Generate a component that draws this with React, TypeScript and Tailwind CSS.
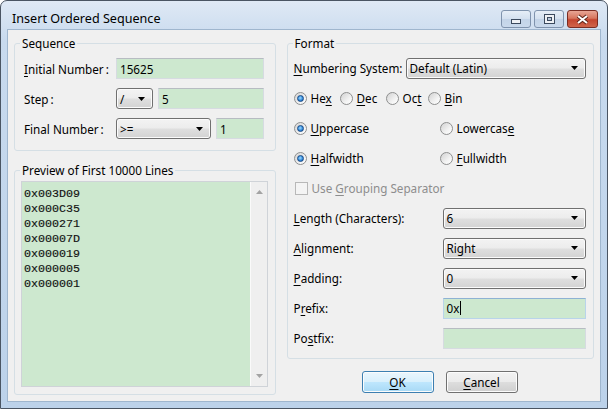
import React from "react";

type Kids = { children?: React.ReactNode };

// mnemonic letter
function U({ children }: Kids) {
  return <span className="underline decoration-1 underline-offset-[2px]">{children}</span>;
}

function Arrow({ color = "#000" }: { color?: string }) {
  return (
    <svg width="7" height="4" viewBox="0 0 7 4" className="shrink-0">
      <path d="M0 0H7L3.5 4Z" fill={color} />
    </svg>
  );
}

function Combo({ value, className }: { value: string; className: string }) {
  return (
    <div
      className={`flex h-[21px] shrink-0 items-center justify-between rounded-[3px] border border-[#707070] bg-[linear-gradient(#f3f3f3,#ececec_48%,#dfdfdf_52%,#d3d3d3)] pl-[3px] pr-[7px] shadow-[inset_0_0_0_1px_#fbfbfb] ${className}`}
    >
      <span className="whitespace-nowrap">{value}</span>
      <Arrow />
    </div>
  );
}

function Field({ className, children, focus }: Kids & { className: string; focus?: boolean }) {
  return (
    <div
      className={`flex h-[21px] shrink-0 items-center border bg-[#cde8cf] px-[3px] ${
        focus ? "border-[#b9d4ea] border-t-[#8eb2d3]" : "border-[#d6dbe1] border-t-[#b7bcc2]"
      } ${className}`}
    >
      {children}
    </div>
  );
}

function Radio({ on }: { on?: boolean }) {
  return (
    <span className="flex h-[13px] w-[13px] shrink-0 items-center justify-center rounded-full border border-[#8e8f8f] bg-[linear-gradient(135deg,#d2d2d2,#f4f4f4_65%,#ffffff)]">
      {on && (
        <span className="h-[7px] w-[7px] rounded-full border border-[#184a86] bg-[radial-gradient(circle_at_45%_40%,#9fdcff,#2f86d8_60%,#1a55a0)]" />
      )}
    </span>
  );
}

function Opt({ on, className, children }: Kids & { on?: boolean; className: string }) {
  return (
    <div className={`flex items-center gap-[4px] ${className}`}>
      <Radio on={on} />
      <span>{children}</span>
    </div>
  );
}

function Btn({ def, children }: Kids & { def?: boolean }) {
  return (
    <div
      className={`flex h-[22px] w-[72px] items-center justify-center rounded-[3px] border shadow-[inset_0_0_0_1px_#fcfcfc] ${
        def
          ? "border-[#3c7fb1] bg-[linear-gradient(#eaf6fd,#d9f0fc_48%,#bee6fd_52%,#a7d9f5)]"
          : "border-[#707070] bg-[linear-gradient(#f2f2f2,#ebebeb_48%,#dddddd_52%,#cfcfcf)]"
      }`}
    >
      {children}
    </div>
  );
}

function Group({ title, className, children }: Kids & { title: string; className: string }) {
  return (
    <fieldset className={`min-w-0 rounded-[3px] border border-[#d5dfe5] ${className}`}>
      <legend className="ml-[5px] px-[2px] leading-[14px]">{title}</legend>
      {children}
    </fieldset>
  );
}

const preview = ["0x003D09", "0x000C35", "0x000271", "0x00007D", "0x000019", "0x000005", "0x000001"];

export default function App() {
  return (
    <div className="flex h-[409px] w-[608px] flex-col rounded-t-[7px] border border-[#4a5563] bg-[linear-gradient(#dfe9f5,#c8daee_40px,#bcd2ea)] font-['Noto_Sans',sans-serif] text-[11.7px] leading-[14px] text-black">
      {/* title bar */}
      <div className="flex h-[29px] shrink-0 items-start justify-between">
        <span className="ml-[11px] mt-[10px] text-[12.6px] leading-[16px]">Insert Ordered Sequence</span>
        <div className="mr-[9px] mt-[9px] flex gap-[3px]">
          <div className="flex h-[18px] w-[30px] items-end justify-center rounded-[3px] border border-[#7f93ad] bg-[linear-gradient(#e6eef7,#d3e0ef_50%,#c3d4e8_50%,#c9d9ec)] pb-[3px]">
            <svg width="10" height="5" viewBox="0 0 10 5">
              <rect x="0.5" y="0.5" width="9" height="4" fill="#eef1f5" stroke="#3b4a5e" />
            </svg>
          </div>
          <div className="flex h-[18px] w-[30px] items-center justify-center rounded-[3px] border border-[#7f93ad] bg-[linear-gradient(#e6eef7,#d3e0ef_50%,#c3d4e8_50%,#c9d9ec)]">
            <svg width="11" height="10" viewBox="0 0 11 10">
              <rect x="0.5" y="0.5" width="10" height="9" fill="#eef1f5" stroke="#3b4a5e" />
              <rect x="3.5" y="3.5" width="4" height="3" fill="#b9c9dc" stroke="#3b4a5e" />
            </svg>
          </div>
          <div className="flex h-[18px] w-[31px] items-center justify-center rounded-[3px] border border-[#7a2c22] bg-[linear-gradient(#e8a595,#d7765f_45%,#c4452f_55%,#d0654b)]">
            <svg width="13" height="11" viewBox="0 0 13 11">
              <path d="M2 2L11 9M11 2L2 9" stroke="#5e2419" strokeWidth="4" />
              <path d="M2 2L11 9M11 2L2 9" stroke="#ffffff" strokeWidth="2" />
            </svg>
          </div>
        </div>
      </div>

      {/* client */}
      <div className="mx-[7px] flex h-[371px] shrink-0 gap-[11px] bg-[#f0f0f0] px-[6px] pt-[6px] shadow-[0_0_0_1px_#9fb6ce]">
        {/* left column */}
        <div className="flex w-[262px] flex-col gap-[12px]">
          <Group title="Sequence" className="h-[115px]">
            <div className="flex flex-col gap-[9px] pl-[9px] pt-[8px]">
              <div className="flex items-center">
                <span className="w-[92px]">
                  <U>I</U>nitial Number{"\u2009"}:
                </span>
                <Field className="w-[148px]">15625</Field>
              </div>
              <div className="flex items-center">
                <span className="w-[92px]">Step{"\u2009"}:</span>
                <Combo className="w-[37px]" value="/" />
                <Field className="ml-[5px] w-[106px]">5</Field>
              </div>
              <div className="flex items-center">
                <span className="w-[92px]">Final Number{"\u2009"}:</span>
                <Combo className="w-[95px]" value=">=" />
                <Field className="ml-[5px] w-[48px]">1</Field>
              </div>
            </div>
          </Group>

          <Group title="Preview of First 10000 Lines" className="h-[232px]">
            <div className="pl-[6px] pt-[4px]">
              <div className="flex h-[206px] w-[247px] border border-[#cfd3d8] bg-[#cde8cf]">
                <div className="flex-1 pl-[2px] pt-[5px] font-['Liberation_Mono',monospace] text-[11.7px] leading-[15px] text-[#111] [-webkit-text-stroke:0.15px_#111]">
                  {preview.map((l) => (
                    <div key={l}>{l}</div>
                  ))}
                </div>
                <div className="flex w-[17px] flex-col items-center justify-between border-l border-[#fafafa] bg-[#efefef] py-[8px]">
                  <svg width="7" height="4" viewBox="0 0 7 4">
                    <path d="M0 4H7L3.5 0Z" fill="#a3a3a3" />
                  </svg>
                  <Arrow color="#a3a3a3" />
                </div>
              </div>
            </div>
          </Group>
        </div>

        {/* right column */}
        <div className="flex w-[308px] flex-col">
          <Group title="Format" className="h-[323px]">
            <div className="flex flex-col pl-[6px] pr-[7px] pt-[3px]">
              <div className="flex h-[30px] items-center">
                <span className="w-[112px]">
                  <U>N</U>umbering System:
                </span>
                <Combo className="w-[180px]" value="Default (Latin)" />
              </div>
              <div className="flex h-[30px] items-center">
                <Opt on className="w-[46px]">
                  He<U>x</U>
                </Opt>
                <Opt className="w-[46px]">
                  <U>D</U>ec
                </Opt>
                <Opt className="w-[42px]">
                  Oc<U>t</U>
                </Opt>
                <Opt className="w-[50px]">
                  <U>B</U>in
                </Opt>
              </div>
              <div className="flex h-[30px] items-center">
                <Opt on className="w-[146px]">
                  <U>U</U>ppercase
                </Opt>
                <Opt className="w-[120px]">
                  Lowercas<U>e</U>
                </Opt>
              </div>
              <div className="flex h-[30px] items-center">
                <Opt on className="w-[146px]">
                  <U>H</U>alfwidth
                </Opt>
                <Opt className="w-[120px]">
                  <U>F</U>ullwidth
                </Opt>
              </div>
              <div className="flex h-[30px] items-center gap-[4px] text-[#8d8d8d]">
                <span className="ml-[1px] h-[13px] w-[13px] border border-[#b8b8b8] bg-[#f4f4f4]" />
                <span>
                  Use <U>G</U>rouping Separator
                </span>
              </div>
              <div className="flex h-[30px] items-center">
                <span className="w-[149px]">
                  <U>L</U>ength (Characters):
                </span>
                <Combo className="w-[143px]" value="6" />
              </div>
              <div className="flex h-[30px] items-center">
                <span className="w-[149px]">
                  <U>A</U>lignment:
                </span>
                <Combo className="w-[143px]" value="Right" />
              </div>
              <div className="flex h-[30px] items-center">
                <span className="w-[149px]">
                  <U>P</U>adding:
                </span>
                <Combo className="w-[143px]" value="0" />
              </div>
              <div className="flex h-[30px] items-center">
                <span className="w-[149px]">
                  P<U>r</U>efix:
                </span>
                <Field focus className="w-[143px]">
                  <span>0x</span>
                  <span className="ml-[1px] h-[14px] w-px bg-black" />
                </Field>
              </div>
              <div className="flex h-[30px] items-center">
                <span className="w-[149px]">
                  Po<U>s</U>tfix:
                </span>
                <Field className="w-[143px]" />
              </div>
            </div>
          </Group>

          <div className="ml-[75px] mt-[12px] flex gap-[12px]">
            <Btn def>
              <U>O</U>K
            </Btn>
            <Btn>
              <U>C</U>ancel
            </Btn>
          </div>
        </div>
      </div>
    </div>
  );
}
